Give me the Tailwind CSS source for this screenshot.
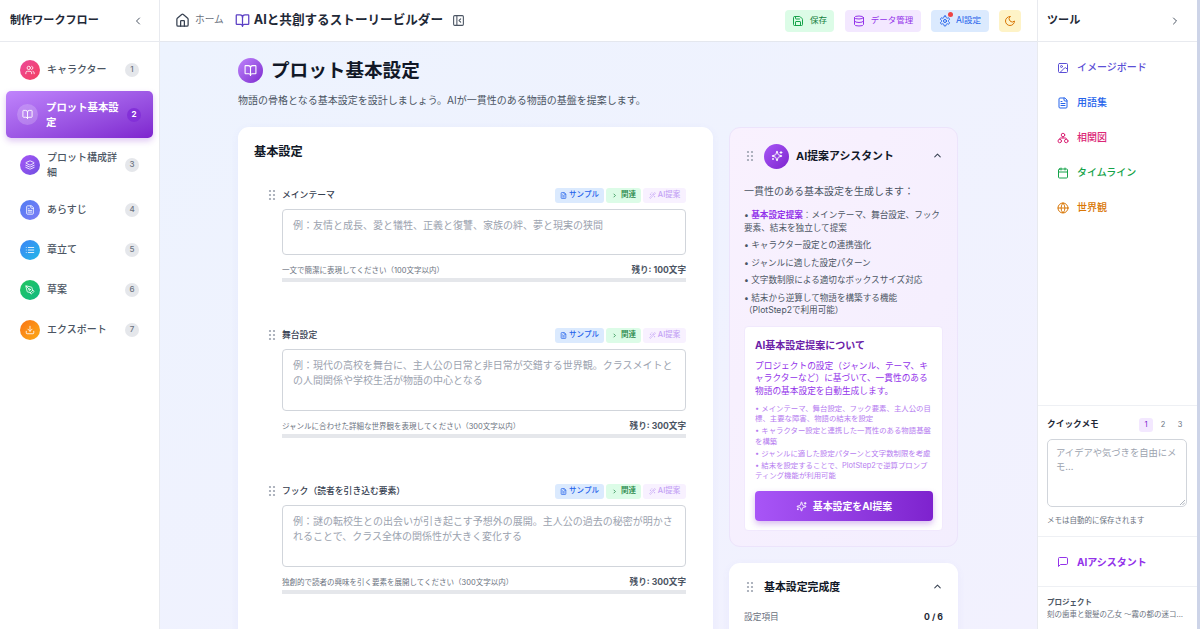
<!DOCTYPE html>
<html lang="ja">
<head>
<meta charset="utf-8">
<title>プロット基本設定</title>
<script src="https://cdn.jsdelivr.net/npm/@tailwindcss/browser@4"></script>
</head>
<body class="m-0 overflow-hidden">
<svg class="hidden">
  <symbol id="grip" viewBox="0 0 24 24"><g fill="currentColor"><circle cx="8" cy="4" r="2.2"/><circle cx="16" cy="4" r="2.2"/><circle cx="8" cy="12" r="2.2"/><circle cx="16" cy="12" r="2.2"/><circle cx="8" cy="20" r="2.2"/><circle cx="16" cy="20" r="2.2"/></g></symbol>
  <symbol id="book" viewBox="0 0 24 24"><path d="M12 7v14"/><path d="M3 18a1 1 0 0 1-1-1V4a1 1 0 0 1 1-1h5a4 4 0 0 1 4 4 4 4 0 0 1 4-4h5a1 1 0 0 1 1 1v13a1 1 0 0 1-1 1h-6a3 3 0 0 0-3 3 3 3 0 0 0-3-3z"/></symbol>
  <symbol id="file" viewBox="0 0 24 24"><path d="M15 2H6a2 2 0 0 0-2 2v16a2 2 0 0 0 2 2h12a2 2 0 0 0 2-2V7Z"/><path d="M14 2v4a2 2 0 0 0 2 2h4"/><path d="M10 9H8"/><path d="M16 13H8"/><path d="M16 17H8"/></symbol>
  <symbol id="spark" viewBox="0 0 24 24"><path d="M9.937 15.5A2 2 0 0 0 8.5 14.063l-6.135-1.582a.5.5 0 0 1 0-.962L8.5 9.936A2 2 0 0 0 9.937 8.5l1.582-6.135a.5.5 0 0 1 .963 0L14.063 8.5A2 2 0 0 0 15.5 9.937l6.135 1.581a.5.5 0 0 1 0 .964L15.5 14.063a2 2 0 0 0-1.437 1.437l-1.582 6.135a.5.5 0 0 1-.963 0z"/><path d="M20 3v4"/><path d="M22 5h-4"/><path d="M4 17v2"/><path d="M5 18H3"/></symbol>
  <symbol id="wand" viewBox="0 0 24 24"><path d="m21.64 3.64-1.28-1.28a1.21 1.21 0 0 0-1.72 0L2.36 18.64a1.21 1.21 0 0 0 0 1.72l1.28 1.28a1.2 1.2 0 0 0 1.72 0L21.64 5.36a1.2 1.2 0 0 0 0-1.72"/><path d="m14 7 3 3"/><path d="M5 6v4"/><path d="M19 14v4"/><path d="M10 2v2"/><path d="M7 8H3"/><path d="M21 16h-4"/><path d="M11 3H9"/></symbol>
</svg>
<div class="flex h-[629px] w-[1200px] overflow-hidden bg-[#eff3fe] text-[#1f2937]" style="font-family:'Inter','Noto Sans CJK JP',sans-serif">

  <!-- left sidebar -->
  <aside class="flex w-[160px] shrink-0 flex-col border-r border-[#e8eaef] bg-white">
    <div class="flex h-[42px] shrink-0 items-center justify-between border-b border-[#e8eaef] pl-[10px] pr-[15px]">
      <span class="text-[11.1px] font-bold text-[#1f2937]">制作ワークフロー</span>
      <svg class="h-[12px] w-[12px] text-[#4b5563]" viewBox="0 0 24 24" fill="none" stroke="currentColor" stroke-width="2" stroke-linecap="round" stroke-linejoin="round"><path d="m15 18-6-6 6-6"/></svg>
    </div>
    <nav class="flex flex-col gap-[3px] px-[6px] pt-[9px] text-[10px] font-medium leading-[15px] text-[#4b5563]">
      <div class="flex h-[37px] items-center gap-[7px] pl-[14px] pr-[14px]">
        <span class="flex h-[20px] w-[20px] shrink-0 items-center justify-center rounded-full bg-gradient-to-br from-[#ec4899] to-[#f43f5e] text-white"><svg class="h-[10px] w-[10px]" viewBox="0 0 24 24" fill="none" stroke="currentColor" stroke-width="2" stroke-linecap="round" stroke-linejoin="round"><path d="M16 21v-2a4 4 0 0 0-4-4H6a4 4 0 0 0-4 4v2"/><circle cx="9" cy="7" r="4"/><path d="M22 21v-2a4 4 0 0 0-3-3.87"/><path d="M16 3.13a4 4 0 0 1 0 7.75"/></svg></span>
        <span class="flex-1">キャラクター</span>
        <span class="flex h-[14px] w-[14px] shrink-0 items-center justify-center rounded-full bg-[#e5e7eb] text-[8px] text-[#6b7280]">1</span>
      </div>
      <div class="flex h-[47px] items-center gap-[8px] rounded-[5px] bg-gradient-to-br from-[#c084fc] to-[#7e22ce] pl-[11px] pr-[12px] text-[10.4px] font-bold text-white shadow-[0_3px_6px_rgba(126,34,206,0.25)]">
        <span class="flex h-[21px] w-[21px] shrink-0 items-center justify-center rounded-full bg-white/20"><svg class="h-[11px] w-[11px]" viewBox="0 0 24 24" fill="none" stroke="currentColor" stroke-width="2" stroke-linecap="round" stroke-linejoin="round"><use href="#book"/></svg></span>
        <span class="flex-1">プロット基本設定</span>
        <span class="flex h-[14px] w-[14px] shrink-0 items-center justify-center rounded-full bg-[#8330d8] text-[8px] text-white">2</span>
      </div>
      <div class="flex h-[47px] items-center gap-[7px] pl-[14px] pr-[14px]">
        <span class="flex h-[20px] w-[20px] shrink-0 items-center justify-center rounded-full bg-gradient-to-br from-[#a855f7] to-[#6d4fe0] text-white"><svg class="h-[10px] w-[10px]" viewBox="0 0 24 24" fill="none" stroke="currentColor" stroke-width="2" stroke-linecap="round" stroke-linejoin="round"><path d="m12.83 2.18a2 2 0 0 0-1.66 0L2.6 6.08a1 1 0 0 0 0 1.83l8.58 3.91a2 2 0 0 0 1.66 0l8.58-3.9a1 1 0 0 0 0-1.83Z"/><path d="m22 17.65-9.17 4.16a2 2 0 0 1-1.66 0L2 17.65"/><path d="m22 12.65-9.17 4.16a2 2 0 0 1-1.66 0L2 12.65"/></svg></span>
        <span class="flex-1">プロット構成詳細</span>
        <span class="flex h-[14px] w-[14px] shrink-0 items-center justify-center rounded-full bg-[#e5e7eb] text-[8px] text-[#6b7280]">3</span>
      </div>
      <div class="flex h-[37px] items-center gap-[7px] pl-[14px] pr-[14px]">
        <span class="flex h-[20px] w-[20px] shrink-0 items-center justify-center rounded-full bg-gradient-to-br from-[#4f7df3] to-[#7c7cf5] text-white"><svg class="h-[10px] w-[10px]" viewBox="0 0 24 24" fill="none" stroke="currentColor" stroke-width="2" stroke-linecap="round" stroke-linejoin="round"><use href="#file"/></svg></span>
        <span class="flex-1">あらすじ</span>
        <span class="flex h-[14px] w-[14px] shrink-0 items-center justify-center rounded-full bg-[#e5e7eb] text-[8px] text-[#6b7280]">4</span>
      </div>
      <div class="flex h-[37px] items-center gap-[7px] pl-[14px] pr-[14px]">
        <span class="flex h-[20px] w-[20px] shrink-0 items-center justify-center rounded-full bg-gradient-to-br from-[#3b82f6] to-[#22b8e6] text-white"><svg class="h-[10px] w-[10px]" viewBox="0 0 24 24" fill="none" stroke="currentColor" stroke-width="2" stroke-linecap="round" stroke-linejoin="round"><path d="M3 12h.01"/><path d="M3 18h.01"/><path d="M3 6h.01"/><path d="M8 12h13"/><path d="M8 18h13"/><path d="M8 6h13"/></svg></span>
        <span class="flex-1">章立て</span>
        <span class="flex h-[14px] w-[14px] shrink-0 items-center justify-center rounded-full bg-[#e5e7eb] text-[8px] text-[#6b7280]">5</span>
      </div>
      <div class="flex h-[37px] items-center gap-[7px] pl-[14px] pr-[14px]">
        <span class="flex h-[20px] w-[20px] shrink-0 items-center justify-center rounded-full bg-gradient-to-br from-[#22c55e] to-[#10b981] text-white"><svg class="h-[10px] w-[10px]" viewBox="0 0 24 24" fill="none" stroke="currentColor" stroke-width="2" stroke-linecap="round" stroke-linejoin="round"><path d="M15.707 21.293a1 1 0 0 1-1.414 0l-1.586-1.586a1 1 0 0 1 0-1.414l5.586-5.586a1 1 0 0 1 1.414 0l1.586 1.586a1 1 0 0 1 0 1.414z"/><path d="m18 13-1.375-6.874a1 1 0 0 0-.746-.776L3.235 2.028a1 1 0 0 0-1.207 1.207L5.35 15.879a1 1 0 0 0 .776.746L13 18"/><path d="m2.3 2.3 7.286 7.286"/><circle cx="11" cy="11" r="2"/></svg></span>
        <span class="flex-1">草案</span>
        <span class="flex h-[14px] w-[14px] shrink-0 items-center justify-center rounded-full bg-[#e5e7eb] text-[8px] text-[#6b7280]">6</span>
      </div>
      <div class="flex h-[37px] items-center gap-[7px] pl-[14px] pr-[14px]">
        <span class="flex h-[20px] w-[20px] shrink-0 items-center justify-center rounded-full bg-gradient-to-br from-[#f97316] to-[#fbab15] text-white"><svg class="h-[10px] w-[10px]" viewBox="0 0 24 24" fill="none" stroke="currentColor" stroke-width="2" stroke-linecap="round" stroke-linejoin="round"><path d="M21 15v4a2 2 0 0 1-2 2H5a2 2 0 0 1-2-2v-4"/><path d="m7 10 5 5 5-5"/><path d="M12 15V3"/></svg></span>
        <span class="flex-1">エクスポート</span>
        <span class="flex h-[14px] w-[14px] shrink-0 items-center justify-center rounded-full bg-[#e5e7eb] text-[8px] text-[#6b7280]">7</span>
      </div>
    </nav>
  </aside>

  <!-- centre -->
  <div class="flex min-w-0 flex-1 flex-col">
    <header class="flex h-[42px] shrink-0 items-center border-b border-[#e4e7ee] bg-white pl-[15px] pr-[16px]">
      <svg class="h-[15px] w-[15px] text-[#374151]" viewBox="0 0 24 24" fill="none" stroke="currentColor" stroke-width="2" stroke-linecap="round" stroke-linejoin="round"><path d="M15 21v-8a1 1 0 0 0-1-1h-4a1 1 0 0 0-1 1v8"/><path d="M3 10a2 2 0 0 1 .709-1.528l7-5.999a2 2 0 0 1 2.582 0l7 5.999A2 2 0 0 1 21 10v9a2 2 0 0 1-2 2H5a2 2 0 0 1-2-2z"/></svg>
      <span class="ml-[5px] text-[9.7px] text-[#6b7280]">ホーム</span>
      <svg class="ml-[11px] h-[15px] w-[15px] text-[#5b3fc4]" viewBox="0 0 24 24" fill="none" stroke="currentColor" stroke-width="2" stroke-linecap="round" stroke-linejoin="round"><use href="#book"/></svg>
      <span class="ml-[4px] text-[12.6px] font-bold text-[#1f2937]">AIと共創するストーリービルダー</span>
      <svg class="ml-[9px] h-[13px] w-[13px] text-[#4b5563]" viewBox="0 0 24 24" fill="none" stroke="currentColor" stroke-width="2" stroke-linecap="round" stroke-linejoin="round"><rect x="3" y="3" width="18" height="18" rx="2"/><path d="M9 3v18"/><path d="m16 15-3-3 3-3"/></svg>
      <div class="ml-auto flex items-center gap-[10px] text-[8.5px]">
        <span class="flex h-[22px] w-[49px] items-center justify-center gap-[6px] rounded-[4px] bg-[#dcfce7] text-[#15803d]"><svg class="h-[12px] w-[12px] text-[#16a34a]" viewBox="0 0 24 24" fill="none" stroke="currentColor" stroke-width="2" stroke-linecap="round" stroke-linejoin="round"><path d="M15.2 3a2 2 0 0 1 1.4.6l3.8 3.8a2 2 0 0 1 .6 1.4V19a2 2 0 0 1-2 2H5a2 2 0 0 1-2-2V5a2 2 0 0 1 2-2z"/><path d="M17 21v-7a1 1 0 0 0-1-1H8a1 1 0 0 0-1 1v7"/><path d="M7 3v4a1 1 0 0 0 1 1h7"/></svg>保存</span>
        <span class="ml-[1px] flex h-[22px] w-[76px] items-center justify-center gap-[6px] rounded-[4px] bg-[#f3e8ff] text-[#9333ea]"><svg class="h-[12px] w-[12px]" viewBox="0 0 24 24" fill="none" stroke="currentColor" stroke-width="2" stroke-linecap="round" stroke-linejoin="round"><ellipse cx="12" cy="5" rx="9" ry="3"/><path d="M3 5V19A9 3 0 0 0 21 19V5"/><path d="M3 12A9 3 0 0 0 21 12"/></svg>データ管理</span>
        <span class="relative flex h-[22px] w-[58px] items-center justify-center gap-[5px] rounded-[4px] bg-[#dbeafe] text-[#2563eb]"><svg class="h-[12px] w-[12px]" viewBox="0 0 24 24" fill="none" stroke="currentColor" stroke-width="2" stroke-linecap="round" stroke-linejoin="round"><path d="M12.22 2h-.44a2 2 0 0 0-2 2v.18a2 2 0 0 1-1 1.73l-.43.25a2 2 0 0 1-2 0l-.15-.08a2 2 0 0 0-2.73.73l-.22.38a2 2 0 0 0 .73 2.73l.15.1a2 2 0 0 1 1 1.72v.51a2 2 0 0 1-1 1.74l-.15.09a2 2 0 0 0-.73 2.73l.22.38a2 2 0 0 0 2.73.73l.15-.08a2 2 0 0 1 2 0l.43.25a2 2 0 0 1 1 1.73V20a2 2 0 0 0 2 2h.44a2 2 0 0 0 2-2v-.18a2 2 0 0 1 1-1.73l.43-.25a2 2 0 0 1 2 0l.15.08a2 2 0 0 0 2.73-.73l.22-.39a2 2 0 0 0-.73-2.73l-.15-.08a2 2 0 0 1-1-1.74v-.5a2 2 0 0 1 1-1.74l.15-.09a2 2 0 0 0 .73-2.73l-.22-.38a2 2 0 0 0-2.73-.73l-.15.08a2 2 0 0 1-2 0l-.43-.25a2 2 0 0 1-1-1.73V4a2 2 0 0 0-2-2z"/><circle cx="12" cy="12" r="3"/></svg>AI設定<span class="absolute left-[17px] top-[2px] h-[5px] w-[5px] rounded-full bg-[#ef4444]"></span></span>
        <span class="flex h-[22px] w-[22px] items-center justify-center rounded-[4px] bg-[#fef3c7] text-[#d97706]"><svg class="h-[12px] w-[12px]" viewBox="0 0 24 24" fill="none" stroke="currentColor" stroke-width="2" stroke-linecap="round" stroke-linejoin="round"><path d="M12 3a6 6 0 0 0 9 9 9 9 0 1 1-9-9Z"/></svg></span>
      </div>
    </header>

    <main class="min-h-0 flex-1 overflow-hidden bg-gradient-to-br from-[#edf3fe] to-[#f2f1fe] pl-[78px] pr-[79px] pt-[16px]">
      <div class="flex items-center gap-[8px]">
        <span class="flex h-[25px] w-[25px] items-center justify-center rounded-full bg-gradient-to-br from-[#c084fc] to-[#7e22ce] text-white"><svg class="h-[13px] w-[13px]" viewBox="0 0 24 24" fill="none" stroke="currentColor" stroke-width="2" stroke-linecap="round" stroke-linejoin="round"><use href="#book"/></svg></span>
        <h1 class="text-[18.6px] font-bold leading-[25px] text-[#111827]">プロット基本設定</h1>
      </div>
      <p class="mt-[10px] text-[10px] leading-[14px] text-[#4b5563]">物語の骨格となる基本設定を設計しましょう。AIが一貫性のある物語の基盤を提案します。</p>

      <div class="mt-[20px] flex items-start gap-[16px]">
        <!-- form card -->
        <section class="w-[475px] shrink-0 rounded-t-[11px] bg-white pb-[40px] pl-[16px] pr-[27px] pt-[16px] shadow-[0_2px_8px_rgba(99,102,241,0.06)]">
          <h2 class="text-[12.2px] font-bold leading-[18px] text-[#111827]">基本設定</h2>
          <div class="mt-[26px] flex flex-col gap-[45px]">

            <div class="pl-[28px]">
              <div class="relative flex h-[16px] items-center justify-between">
                <svg class="absolute left-[-16px] top-[2px] h-[12px] w-[12px] text-[#9ca3af]" viewBox="0 0 24 24"><use href="#grip"/></svg>
                <span class="text-[8.8px] font-medium text-[#374151]">メインテーマ</span>
                <div class="flex gap-[2px] text-[7.5px] font-medium">
                  <span class="flex h-[15px] w-[49px] items-center justify-center gap-[2px] rounded-[3px] bg-[#dbeafe] text-[#2563eb]"><svg class="h-[7px] w-[7px]" viewBox="0 0 24 24" fill="none" stroke="currentColor" stroke-width="2.5"><use href="#file"/></svg>サンプル</span>
                  <span class="flex h-[15px] w-[35px] items-center justify-center gap-[3px] rounded-[3px] bg-[#dcfce7] text-[#15803d]"><svg class="h-[7px] w-[7px]" viewBox="0 0 24 24" fill="none" stroke="currentColor" stroke-width="2.5"><path d="m9 18 6-6-6-6"/></svg>関連</span>
                  <span class="flex h-[15px] w-[43px] items-center justify-center gap-[2px] rounded-[3px] bg-[#f3e8ff]/60 text-[#c4a3f5]"><svg class="h-[7px] w-[7px]" viewBox="0 0 24 24" fill="none" stroke="currentColor" stroke-width="2"><use href="#wand"/></svg>AI提案</span>
                </div>
              </div>
              <div class="mt-[6px] h-[46px] rounded-[4px] border border-[#d1d5db] bg-white px-[10px] pt-[8px] text-[10px] leading-[15px] text-[#9ca3af]">例：友情と成長、愛と犠牲、正義と復讐、家族の絆、夢と現実の狭間</div>
              <div class="mt-[9px] flex h-[13px] items-center justify-between">
                <span class="text-[7.5px] text-[#6b7280]">一文で簡潔に表現してください（100文字以内）</span>
                <span class="text-[8.6px] font-bold text-[#4b5563]">残り: 100文字</span>
              </div>
              <div class="mt-[1px] h-[4px] bg-[#e5e7eb]"></div>
            </div>

            <div class="pl-[28px]">
              <div class="relative flex h-[16px] items-center justify-between">
                <svg class="absolute left-[-16px] top-[2px] h-[12px] w-[12px] text-[#9ca3af]" viewBox="0 0 24 24"><use href="#grip"/></svg>
                <span class="text-[8.8px] font-medium text-[#374151]">舞台設定</span>
                <div class="flex gap-[2px] text-[7.5px] font-medium">
                  <span class="flex h-[15px] w-[49px] items-center justify-center gap-[2px] rounded-[3px] bg-[#dbeafe] text-[#2563eb]"><svg class="h-[7px] w-[7px]" viewBox="0 0 24 24" fill="none" stroke="currentColor" stroke-width="2.5"><use href="#file"/></svg>サンプル</span>
                  <span class="flex h-[15px] w-[35px] items-center justify-center gap-[3px] rounded-[3px] bg-[#dcfce7] text-[#15803d]"><svg class="h-[7px] w-[7px]" viewBox="0 0 24 24" fill="none" stroke="currentColor" stroke-width="2.5"><path d="m9 18 6-6-6-6"/></svg>関連</span>
                  <span class="flex h-[15px] w-[43px] items-center justify-center gap-[2px] rounded-[3px] bg-[#f3e8ff]/60 text-[#c4a3f5]"><svg class="h-[7px] w-[7px]" viewBox="0 0 24 24" fill="none" stroke="currentColor" stroke-width="2"><use href="#wand"/></svg>AI提案</span>
                </div>
              </div>
              <div class="mt-[6px] h-[62px] rounded-[4px] border border-[#d1d5db] bg-white px-[10px] pt-[8px] text-[10px] leading-[15px] text-[#9ca3af]">例：現代の高校を舞台に、主人公の日常と非日常が交錯する世界観。クラスメイトとの人間関係や学校生活が物語の中心となる</div>
              <div class="mt-[9px] flex h-[13px] items-center justify-between">
                <span class="text-[7.5px] text-[#6b7280]">ジャンルに合わせた詳細な世界観を表現してください（300文字以内）</span>
                <span class="text-[8.6px] font-bold text-[#4b5563]">残り: 300文字</span>
              </div>
              <div class="mt-[1px] h-[4px] bg-[#e5e7eb]"></div>
            </div>

            <div class="pl-[28px]">
              <div class="relative flex h-[16px] items-center justify-between">
                <svg class="absolute left-[-16px] top-[2px] h-[12px] w-[12px] text-[#9ca3af]" viewBox="0 0 24 24"><use href="#grip"/></svg>
                <span class="text-[8.8px] font-medium text-[#374151]">フック（読者を引き込む要素）</span>
                <div class="flex gap-[2px] text-[7.5px] font-medium">
                  <span class="flex h-[15px] w-[49px] items-center justify-center gap-[2px] rounded-[3px] bg-[#dbeafe] text-[#2563eb]"><svg class="h-[7px] w-[7px]" viewBox="0 0 24 24" fill="none" stroke="currentColor" stroke-width="2.5"><use href="#file"/></svg>サンプル</span>
                  <span class="flex h-[15px] w-[35px] items-center justify-center gap-[3px] rounded-[3px] bg-[#dcfce7] text-[#15803d]"><svg class="h-[7px] w-[7px]" viewBox="0 0 24 24" fill="none" stroke="currentColor" stroke-width="2.5"><path d="m9 18 6-6-6-6"/></svg>関連</span>
                  <span class="flex h-[15px] w-[43px] items-center justify-center gap-[2px] rounded-[3px] bg-[#f3e8ff]/60 text-[#c4a3f5]"><svg class="h-[7px] w-[7px]" viewBox="0 0 24 24" fill="none" stroke="currentColor" stroke-width="2"><use href="#wand"/></svg>AI提案</span>
                </div>
              </div>
              <div class="mt-[6px] h-[62px] rounded-[4px] border border-[#d1d5db] bg-white px-[10px] pt-[8px] text-[10px] leading-[15px] text-[#9ca3af]">例：謎の転校生との出会いが引き起こす予想外の展開。主人公の過去の秘密が明かされることで、クラス全体の関係性が大きく変化する</div>
              <div class="mt-[9px] flex h-[13px] items-center justify-between">
                <span class="text-[7.5px] text-[#6b7280]">独創的で読者の興味を引く要素を展開してください（300文字以内）</span>
                <span class="text-[8.6px] font-bold text-[#4b5563]">残り: 300文字</span>
              </div>
              <div class="mt-[1px] h-[4px] bg-[#e5e7eb]"></div>
            </div>

          </div>
        </section>

        <!-- right column -->
        <div class="flex w-[229px] shrink-0 flex-col gap-[16px]">
          <section class="h-[420px] rounded-[11px] border border-[#ece4fb] bg-gradient-to-br from-[#f9f1fe] to-[#f3eefe] pl-[14px] pr-[14px]">
            <div class="relative flex h-[56px] items-center pl-[20px]">
              <svg class="absolute left-[0px] top-[22px] h-[12px] w-[12px] text-[#9ca3af]" viewBox="0 0 24 24"><use href="#grip"/></svg>
              <span class="flex h-[25px] w-[25px] items-center justify-center rounded-full bg-gradient-to-br from-[#a855f7] to-[#7e22ce] text-white"><svg class="h-[12px] w-[12px]" viewBox="0 0 24 24" fill="none" stroke="currentColor" stroke-width="2" stroke-linecap="round" stroke-linejoin="round"><use href="#spark"/></svg></span>
              <span class="ml-[7px] text-[10.9px] font-bold text-[#111827]">AI提案アシスタント</span>
              <svg class="absolute right-[0px] top-[22px] h-[11px] w-[11px] text-[#374151]" viewBox="0 0 24 24" fill="none" stroke="currentColor" stroke-width="2.2" stroke-linecap="round" stroke-linejoin="round"><path d="m18 15-6-6-6 6"/></svg>
            </div>
            <p class="mt-[0px] text-[10px] leading-[15px] text-[#4b5563]">一貫性のある基本設定を生成します：</p>
            <ul class="mt-[10px] flex flex-col gap-[5px] text-[8.6px] leading-[12.5px] text-[#4b5563]">
              <li>• <span class="font-bold text-[#9333ea]">基本設定提案</span>：メインテーマ、舞台設定、フック要素、結末を独立して提案</li>
              <li>• キャラクター設定との連携強化</li>
              <li>• ジャンルに適した設定パターン</li>
              <li>• 文字数制限による適切なボックスサイズ対応</li>
              <li>• 結末から逆算して物語を構築する機能（PlotStep2で利用可能）</li>
            </ul>
            <div class="mt-[9px] h-[205px] rounded-[4px] border border-[#f1e9fd] bg-white pl-[10px] pr-[8px] pt-[11px]">
              <h3 class="text-[10px] font-bold leading-[15px] text-[#6b21a8]">AI基本設定提案について</h3>
              <p class="mt-[7px] text-[8.7px] leading-[12.5px] text-[#9333ea]">プロジェクトの設定（ジャンル、テーマ、キャラクターなど）に基づいて、一貫性のある物語の基本設定を自動生成します。</p>
              <ul class="mt-[7px] flex flex-col gap-[1.5px] text-[7.4px] leading-[10.4px] text-[#b67df0]">
                <li>• メインテーマ、舞台設定、フック要素、主人公の目標、主要な障害、物語の結末を設定</li>
                <li>• キャラクター設定と連携した一貫性のある物語基盤を構築</li>
                <li>• ジャンルに適した設定パターンと文字数制限を考慮</li>
                <li>• 結末を設定することで、PlotStep2で逆算プロンプティング機能が利用可能</li>
              </ul>
              <div class="mt-[10px] mr-[1px] flex h-[30px] items-center justify-center gap-[6px] rounded-[4px] bg-gradient-to-r from-[#a855f7] to-[#7e22ce] text-[9.9px] font-bold text-white shadow-[0_3px_6px_rgba(126,34,206,0.3)]">
                <svg class="h-[11px] w-[11px]" viewBox="0 0 24 24" fill="none" stroke="currentColor" stroke-width="2" stroke-linecap="round" stroke-linejoin="round"><use href="#spark"/></svg>基本設定をAI提案
              </div>
            </div>
          </section>

          <section class="h-[120px] rounded-t-[11px] bg-white pl-[15px] pr-[15px] shadow-[0_2px_8px_rgba(99,102,241,0.06)]">
            <div class="relative flex h-[48px] items-center pl-[20px]">
              <svg class="absolute left-[0px] top-[18px] h-[12px] w-[12px] text-[#9ca3af]" viewBox="0 0 24 24"><use href="#grip"/></svg>
              <span class="text-[10.9px] font-bold text-[#111827]">基本設定完成度</span>
              <svg class="absolute right-[0px] top-[18px] h-[11px] w-[11px] text-[#374151]" viewBox="0 0 24 24" fill="none" stroke="currentColor" stroke-width="2.2" stroke-linecap="round" stroke-linejoin="round"><path d="m18 15-6-6-6 6"/></svg>
            </div>
            <div class="mt-[0px] flex items-center justify-between text-[8.7px] leading-[12px]">
              <span class="text-[#6b7280]">設定項目</span>
              <span class="font-bold text-[#1f2937]">0 / 6</span>
            </div>
          </section>
        </div>
      </div>
    </main>
  </div>

  <!-- right sidebar -->
  <aside class="flex w-[160px] shrink-0 flex-col border-l border-[#e8eaef] bg-white">
    <div class="flex h-[42px] shrink-0 items-center justify-between border-b border-[#e8eaef] pl-[9px] pr-[16px]">
      <span class="text-[11.1px] font-bold text-[#1f2937]">ツール</span>
      <svg class="h-[12px] w-[12px] text-[#4b5563]" viewBox="0 0 24 24" fill="none" stroke="currentColor" stroke-width="2" stroke-linecap="round" stroke-linejoin="round"><path d="m9 18 6-6-6-6"/></svg>
    </div>
    <nav class="flex flex-1 flex-col pl-[19px] pt-[8px] text-[10px] font-medium">
      <div class="flex h-[35px] items-center gap-[8px] text-[#5b4fd6]"><svg class="h-[12px] w-[12px]" viewBox="0 0 24 24" fill="none" stroke="currentColor" stroke-width="2" stroke-linecap="round" stroke-linejoin="round"><rect x="3" y="3" width="18" height="18" rx="2"/><circle cx="9" cy="9" r="2"/><path d="m21 15-3.086-3.086a2 2 0 0 0-2.828 0L6 21"/></svg>イメージボード</div>
      <div class="flex h-[35px] items-center gap-[8px] text-[#2563eb]"><svg class="h-[12px] w-[12px]" viewBox="0 0 24 24" fill="none" stroke="currentColor" stroke-width="2" stroke-linecap="round" stroke-linejoin="round"><use href="#file"/></svg>用語集</div>
      <div class="flex h-[35px] items-center gap-[8px] text-[#db2777]"><svg class="h-[12px] w-[12px]" viewBox="0 0 24 24" fill="none" stroke="currentColor" stroke-width="2" stroke-linecap="round" stroke-linejoin="round"><circle cx="12" cy="6" r="3.5"/><circle cx="5.5" cy="18" r="3.5"/><circle cx="18.5" cy="18" r="3.5"/><path d="M5.5 14.5V13a1 1 0 0 1 1-1h11a1 1 0 0 1 1 1v1.5"/><path d="M12 12V9.5"/></svg>相関図</div>
      <div class="flex h-[35px] items-center gap-[8px] text-[#16a34a]"><svg class="h-[12px] w-[12px]" viewBox="0 0 24 24" fill="none" stroke="currentColor" stroke-width="2" stroke-linecap="round" stroke-linejoin="round"><path d="M8 2v4"/><path d="M16 2v4"/><rect x="3" y="4" width="18" height="18" rx="2"/><path d="M3 10h18"/></svg>タイムライン</div>
      <div class="flex h-[35px] items-center gap-[8px] text-[#d97706]"><svg class="h-[12px] w-[12px]" viewBox="0 0 24 24" fill="none" stroke="currentColor" stroke-width="2" stroke-linecap="round" stroke-linejoin="round"><circle cx="12" cy="12" r="10"/><path d="M12 2a14.5 14.5 0 0 0 0 20 14.5 14.5 0 0 0 0-20"/><path d="M2 12h20"/></svg>世界観</div>
    </nav>
    <div class="h-[131px] shrink-0 border-t border-[#eef0f4] pl-[9px] pr-[10px]">
      <div class="flex h-[33px] items-center justify-between pt-[5px]">
        <span class="text-[8.7px] font-bold text-[#1f2937]">クイックメモ</span>
        <div class="flex gap-[3px] text-[7.5px] text-[#6b7280]">
          <span class="flex h-[14px] w-[14px] items-center justify-center rounded-[3px] bg-[#f3e8ff] text-[#7e22ce]">1</span>
          <span class="flex h-[14px] w-[14px] items-center justify-center">2</span>
          <span class="flex h-[14px] w-[14px] items-center justify-center">3</span>
        </div>
      </div>
      <div class="relative h-[68px] rounded-[5px] border border-[#d1d5db] px-[8px] pt-[6px] text-[9.3px] leading-[14px] text-[#9ca3af]">アイデアや気づきを自由にメモ...
        <svg class="absolute bottom-[1px] right-[1px] h-[6px] w-[6px] text-[#9ca3af]" viewBox="0 0 6 6" fill="none" stroke="currentColor" stroke-width="0.8"><path d="M1 6 6 1M3.5 6 6 3.5"/></svg>
      </div>
      <p class="mt-[8px] text-[7.5px] leading-[12px] text-[#6b7280]">メモは自動的に保存されます</p>
    </div>
    <div class="flex h-[50px] shrink-0 items-center gap-[8px] border-t border-[#eef0f4] pl-[19px] pt-[1px] text-[10px] font-bold text-[#9333ea]">
      <svg class="h-[12px] w-[12px]" viewBox="0 0 24 24" fill="none" stroke="currentColor" stroke-width="2" stroke-linecap="round" stroke-linejoin="round"><path d="M21 15a2 2 0 0 1-2 2H7l-4 4V5a2 2 0 0 1 2-2h14a2 2 0 0 1 2 2z"/></svg>AIアシスタント
    </div>
    <div class="h-[43px] shrink-0 border-t border-[#eef0f4] pl-[9px] pr-[10px] pt-[10px] text-[7.5px] leading-[12px]">
      <div class="font-bold text-[#4b5563]">プロジェクト</div>
      <div class="truncate text-[#6b7280]">刻の歯車と銀髪の乙女 〜霧の都の迷コンパス〜</div>
    </div>
  </aside>
  <div class="w-[3px] shrink-0 bg-[#cdd4e8]"></div>
</div>
</body>
</html>
